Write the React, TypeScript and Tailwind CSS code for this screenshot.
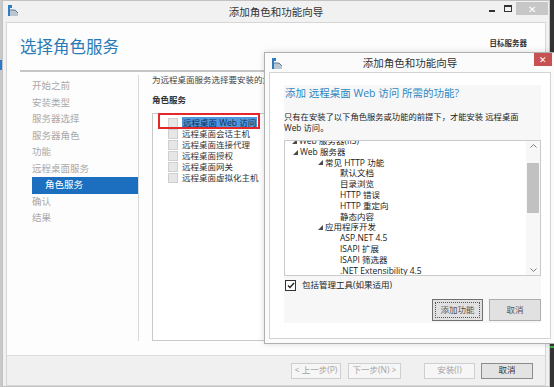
import React from 'react';

const navItems = ['开始之前', '安装类型', '服务器选择', '服务器角色', '功能', '远程桌面服务', '角色服务', '确认', '结果'];

const roleServices = [
  '远程桌面 Web 访问',
  '远程桌面会话主机',
  '远程桌面连接代理',
  '远程桌面授权',
  '远程桌面网关',
  '远程桌面虚拟化主机',
];

type TreeRow = { text: string; pad: string; open?: boolean };

// indents measured from the box's inner left edge
const treeRows: TreeRow[] = [
  { text: 'Web 服务器(IIS)', pad: 'pl-[7px]', open: true },
  { text: 'Web 服务器', pad: 'pl-[8px]', open: true },
  { text: '常见 HTTP 功能', pad: 'pl-[33px]', open: true },
  { text: '默认文档', pad: 'pl-[55px]' },
  { text: '目录浏览', pad: 'pl-[55px]' },
  { text: 'HTTP 错误', pad: 'pl-[55px]' },
  { text: 'HTTP 重定向', pad: 'pl-[55px]' },
  { text: '静态内容', pad: 'pl-[55px]' },
  { text: '应用程序开发', pad: 'pl-[33px]', open: true },
  { text: 'ASP.NET 4.5', pad: 'pl-[55px]' },
  { text: 'ISAPI 扩展', pad: 'pl-[55px]' },
  { text: 'ISAPI 筛选器', pad: 'pl-[55px]' },
  { text: '.NET Extensibility 4.5', pad: 'pl-[55px]' },
];

function WizardIcon() {
  return (
    <svg width="10" height="11" viewBox="0 0 10 11">
      <rect x="0" y="0" width="4" height="3" fill="#2f7cc1" />
      <rect x="0" y="3" width="2" height="8" fill="#2f7cc1" />
      <polygon points="2,5 7,5 10,8 10,11 2,11" fill="#b9c6cf" />
      <polyline points="2,5 7,5 10,8" fill="none" stroke="#5f7d95" strokeWidth="1" />
    </svg>
  );
}

function Chevron({ down }: { down?: boolean }) {
  return (
    <svg width="7" height="4" viewBox="0 0 7 4">
      <path d={down ? 'M0.5 0.5 L3.5 3.5 L6.5 0.5' : 'M0.5 3.5 L3.5 0.5 L6.5 3.5'} fill="none" stroke="#7d7d7d" strokeWidth="1" />
    </svg>
  );
}

function Expander() {
  return (
    <svg width="5" height="5" viewBox="0 0 5 5" className="shrink-0">
      <polygon points="5,0 5,5 0,5" fill="#4a4a4a" />
    </svg>
  );
}

export default function App() {
  return (
    <div className="relative w-[554px] h-[387px] overflow-hidden flex bg-[#2f2f2f] font-['Open_Sans','Noto_Sans_CJK_SC',sans-serif]">
      {/* desktop edge, left */}
      <div className="w-[2px] h-full bg-[#c9c9c9] flex flex-col">
        <div className="h-[60px]" />
        <div className="h-[10px] bg-[#2f78c8]" />
      </div>

      {/* main wizard window */}
      <div className="w-[548px] h-[387px] border border-[#c2c2c2] bg-[#f1f1f1] flex flex-col">
        {/* title bar */}
        <div className="h-[21px] grid grid-cols-[1fr_auto_1fr]">
          <div className="pl-[5px] pt-[4px]">
            <WizardIcon />
          </div>
          <div className="self-center text-[10.5px] leading-[14px] text-[#333]">添加角色和功能向导</div>
          <div className="flex justify-end items-start pt-[1px] pr-[1px]">
            <div className="w-[16px] h-[13px] flex items-end justify-center pb-[3px]">
              <div className="w-[6px] h-[2px] bg-[#333]" />
            </div>
            <div className="w-[16px] h-[13px] flex items-center justify-center">
              <div className="w-[8px] h-[7px] border border-[#333] border-t-2" />
            </div>
            <div className="w-[32px] h-[13px] bg-[#c7c7c7] flex items-center justify-center text-white text-[10px] leading-none">
              ✕
            </div>
          </div>
        </div>

        {/* client area */}
        <div className="flex-1 mx-[3px] border border-[#d6d6d6] bg-[#fdfdfd] flex flex-col">
          <div className="flex-1 flex flex-col">
            <div className="flex justify-between items-start pt-[14px] pl-[13px] pr-[18px]">
              <h1 className="text-[16.5px] leading-[20px] text-[#2a7ab6]">选择角色服务</h1>
              <div className="mt-[1px] text-[7.5px] leading-[10px] font-bold text-[#333]">目标服务器</div>
            </div>
            <div className="mt-[13px] mx-[13px] h-[2px] bg-[#c6c6c6]" />

            <div className="h-[269px] flex pl-[13px]">
              {/* steps */}
              <div className="w-[119px] mt-[3px] pt-[3px] border-r border-[#d9d9d9] flex flex-col">
                {navItems.map((item) =>
                  item === '角色服务' ? (
                    <div key={item} className="h-[16.5px] ml-[12px] bg-[#1c6fbf] text-white text-[9.5px] flex items-center pl-[13px]">
                      {item}
                    </div>
                  ) : (
                    <div key={item} className="h-[16.5px] pl-[12px] text-[9.5px] text-[#a9a9a9] flex items-center">
                      {item}
                    </div>
                  )
                )}
              </div>

              {/* role services */}
              <div className="flex-1 flex flex-col pl-[13px] pt-[2px] pr-[10px]">
                <div className="text-[8.5px] leading-[12px] text-[#444] whitespace-nowrap">为远程桌面服务选择要安装的角色服务</div>
                <div className="mt-[8px] text-[8.5px] leading-[12px] font-bold text-[#333]">角色服务</div>
                <div className="relative mt-[7px] flex-1 border border-[#c9c9c9] bg-white pt-[3px]">
                  {roleServices.map((s, i) => (
                    <div key={s} className="h-[11px] flex items-center pl-[15px] gap-[4px]">
                      <div className="w-[10px] h-[10px] bg-[#e6e6e6] border border-[#cfcfcf]" />
                      {i === 0 ? (
                        <span className="text-[8.5px] leading-[11px] bg-[#4f96dc] text-[#0f2c55] px-[1px] whitespace-nowrap">{s}</span>
                      ) : (
                        <span className="text-[8.5px] leading-[11px] text-[#333] whitespace-nowrap">{s}</span>
                      )}
                    </div>
                  ))}
                  <div className="absolute left-[5px] top-[-1px] w-[102px] h-[16px] border-2 border-[#e5262a]" />
                </div>
              </div>
            </div>
          </div>

          {/* bottom buttons */}
          <div className="h-[30px] border-t border-[#dcdcdc] bg-[#f0f0f0] flex items-center justify-end pr-[12px] text-[8.5px]">
            <div className="w-[50px] h-[16px] border border-[#cfcfcf] bg-[#f6f6f6] text-[#a3a3a3] flex items-center justify-center">&lt; 上一步(P)</div>
            <div className="ml-[7px] w-[53px] h-[16px] border border-[#cfcfcf] bg-[#f6f6f6] text-[#a3a3a3] flex items-center justify-center">下一步(N) &gt;</div>
            <div className="ml-[23px] w-[51px] h-[16px] border border-[#cfcfcf] bg-[#f6f6f6] text-[#a3a3a3] flex items-center justify-center">安装(I)</div>
            <div className="ml-[6px] w-[52px] h-[16px] border border-[#8c8c8c] bg-[#e3e3e3] text-[#333] flex items-center justify-center">取消</div>
          </div>
        </div>
      </div>

      {/* desktop edge, right */}
      <div className="w-[4px] h-full bg-[#333] flex flex-col">
        <div className="h-[346px]" />
        <div className="h-[2px] bg-[#3cb043]" />
      </div>

      {/* required features dialog */}
      <div className="absolute left-[264px] top-[52px] w-[292px] h-[292px] border border-[#b0b0b0] bg-[#fbfbfb] shadow-[0_0_6px_rgba(0,0,0,0.15)] flex flex-col">
        <div className="h-[19px] grid grid-cols-[1fr_auto_1fr]">
          <div className="pl-[7px] pt-[5px]">
            <WizardIcon />
          </div>
          <div className="self-center text-[10.5px] leading-[14px] text-[#333]">添加角色和功能向导</div>
          <div className="flex justify-end pr-[3px]">
            <div className="w-[18px] h-[13px] bg-[#c75050] text-white text-[9px] leading-none flex items-center justify-center">✕</div>
          </div>
        </div>

        <div className="flex-1 mx-[4px] mb-[4px] border border-[#d3d3d3] bg-white">
          <div className="ml-[14px] mt-[12px] w-[257px] bg-[#f7f7f7] pb-[2px]">
            <div className="pt-[1px] pl-[1px] text-[10.5px] leading-[14px] text-[#2e86c1] whitespace-nowrap">
              添加 远程桌面 Web 访问 所需的功能?
            </div>
            <div className="mt-[11px] text-[8.3px] leading-[11px] text-[#222] whitespace-nowrap">
              只有在安装了以下角色服务或功能的前提下，才能安装 远程桌面
              <br />
              Web 访问。
            </div>

            <div className="mt-[7px] h-[136px] border border-[#cacaca] bg-white flex overflow-hidden">
              <div className="flex-1 -mt-[5px]">
                {treeRows.map((r) => (
                  <div key={r.text} className={`h-[10.8px] flex items-center ${r.pad} text-[8.5px] leading-[10.8px] text-[#1a1a1a] whitespace-nowrap`}>
                    {r.open && <Expander />}
                    <span className={r.open ? 'ml-[2px]' : ''}>{r.text}</span>
                  </div>
                ))}
              </div>
              <div className="w-[14px] bg-[#f7f7f7] flex flex-col">
                <div className="h-[10px] flex items-center justify-center">
                  <Chevron />
                </div>
                <div className="mt-[12px] mx-[1px] h-[50px] bg-[#c1c1c1]" />
                <div className="flex-1" />
                <div className="h-[10px] flex items-center justify-center">
                  <Chevron down />
                </div>
              </div>
            </div>

            <div className="mt-[3px] h-[12px] flex items-center gap-[6px] pl-[1px]">
              <div className="w-[11px] h-[11px] border border-[#333] bg-white flex items-center justify-center">
                <svg width="8" height="7" viewBox="0 0 8 7">
                  <path d="M1 3.5 L3 5.5 L7 1" fill="none" stroke="#222" strokeWidth="1.4" />
                </svg>
              </div>
              <span className="text-[8.5px] leading-[12px] text-[#222]">包括管理工具(如果适用)</span>
            </div>

            <div className="mt-[8px] flex justify-end gap-[6px] text-[8.5px]">
              <div className="relative w-[51px] h-[22px] border border-[#707070] bg-[#e1e1e1] text-[#555] flex items-center justify-center">
                添加功能
                <span className="absolute inset-[2px] border border-dotted border-[#555]" />
              </div>
              <div className="w-[52px] h-[22px] border border-[#adadad] bg-[#e1e1e1] text-[#555] flex items-center justify-center">取消</div>
            </div>
          </div>
        </div>
      </div>
    </div>
  );
}
